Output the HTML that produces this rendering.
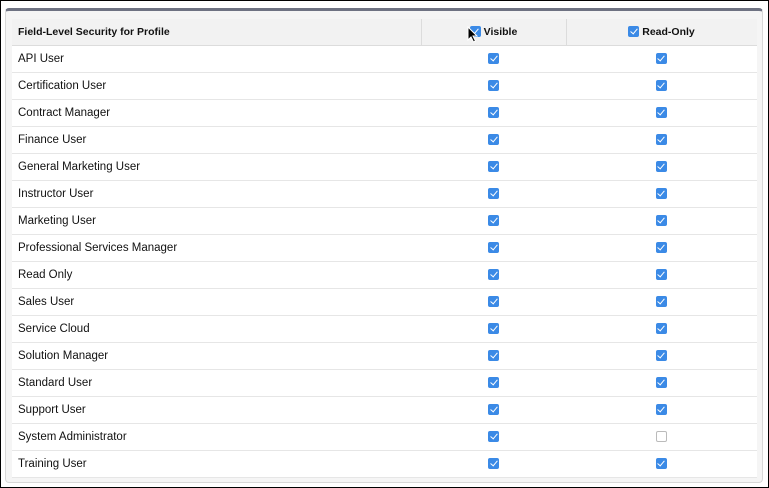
<!DOCTYPE html>
<html><head><style>
body{margin:0;width:769px;height:488px;background:#fff;font-family:"Liberation Sans",Arial,sans-serif;overflow:hidden;position:relative}
.frame{position:absolute;left:0;top:0;width:767px;height:486px;border:1px solid #000}
.panel{position:absolute;left:5px;top:8px;width:758px;height:475px;background:#f5f5f5;border:1px solid #d8d8d8;border-top:3px solid #6e7282;border-radius:4px;box-sizing:border-box}
table{position:absolute;left:12px;top:19px;width:745px;border-collapse:collapse;background:#fff;font-size:11.5px;color:#111}
td,th{height:26px;border-bottom:1px solid #e6e6e6;padding:0}
th{background:#f2f2f2;font-weight:bold;font-size:10.5px;height:26px;border-right:1px solid #dcdcdc;border-bottom:1px solid #dcdcdc}
th:last-child{border-right:none}
td:first-child,th:first-child{text-align:left;padding-left:6px}
td{text-align:center}
.c1{width:403px}.c2{width:144px}
.cb{display:inline-block;width:11px;height:11px;border-radius:2px;background:#3b8ae6;vertical-align:middle;position:relative;margin-left:-1px}
.cb:after{content:"";position:absolute;left:3.5px;top:1px;width:3px;height:6px;border:solid #fff;border-width:0 1.5px 1.5px 0;transform:rotate(40deg)}
.cb.off{background:#fff;border:1px solid #bbb;width:9px;height:9px}
.cb.off:after{display:none}
th .cb{margin-right:3px;vertical-align:-2px}
</style></head><body>
<div class="frame"></div>
<div class="panel"></div>
<table>
<tr><th class="c1">Field-Level Security for Profile</th><th class="c2"><span class="cb"></span>Visible</th><th><span class="cb"></span>Read-Only</th></tr>
<tr><td>API User</td><td><span class="cb"></span></td><td><span class="cb"></span></td></tr>
<tr><td>Certification User</td><td><span class="cb"></span></td><td><span class="cb"></span></td></tr>
<tr><td>Contract Manager</td><td><span class="cb"></span></td><td><span class="cb"></span></td></tr>
<tr><td>Finance User</td><td><span class="cb"></span></td><td><span class="cb"></span></td></tr>
<tr><td>General Marketing User</td><td><span class="cb"></span></td><td><span class="cb"></span></td></tr>
<tr><td>Instructor User</td><td><span class="cb"></span></td><td><span class="cb"></span></td></tr>
<tr><td>Marketing User</td><td><span class="cb"></span></td><td><span class="cb"></span></td></tr>
<tr><td>Professional Services Manager</td><td><span class="cb"></span></td><td><span class="cb"></span></td></tr>
<tr><td>Read Only</td><td><span class="cb"></span></td><td><span class="cb"></span></td></tr>
<tr><td>Sales User</td><td><span class="cb"></span></td><td><span class="cb"></span></td></tr>
<tr><td>Service Cloud</td><td><span class="cb"></span></td><td><span class="cb"></span></td></tr>
<tr><td>Solution Manager</td><td><span class="cb"></span></td><td><span class="cb"></span></td></tr>
<tr><td>Standard User</td><td><span class="cb"></span></td><td><span class="cb"></span></td></tr>
<tr><td>Support User</td><td><span class="cb"></span></td><td><span class="cb"></span></td></tr>
<tr><td>System Administrator</td><td><span class="cb"></span></td><td><span class="cb off"></span></td></tr>
<tr><td>Training User</td><td><span class="cb"></span></td><td><span class="cb"></span></td></tr>
</table>
<svg style="position:absolute;left:467px;top:26px" width="12" height="18" viewBox="0 0 12 18"><path d="M1 1 L1 14 L4 11 L6.5 16 L8.5 15 L6 10 L10 10 Z" fill="#000" stroke="#fff" stroke-width="1"/></svg>
</body></html>
